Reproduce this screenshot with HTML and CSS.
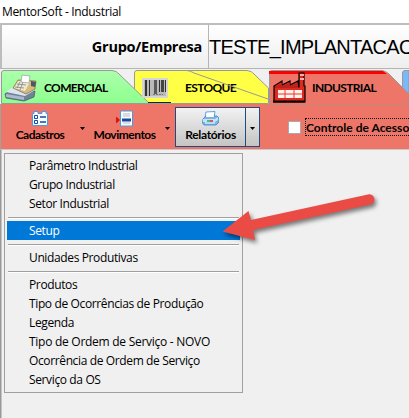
FILE: index.html
```html
<!DOCTYPE html>
<html lang="pt-BR">
<head>
<meta charset="utf-8">
<title>MentorSoft - Industrial</title>
<link rel="stylesheet" href="styles.css">
</head>
<body>
<div class="window">
  <div class="titlebar">MentorSoft - Industrial</div>
  <header class="company">
    <div class="company-label">Grupo/Empresa</div>
    <div class="company-value">TESTE_IMPLANTACAO</div>
  </header>
  <nav class="tabs">
    <svg class="tab-shapes" width="409" height="36" viewBox="0 0 409 36">
      <defs><linearGradient id="green" x2="0" y2="1"><stop stop-color="#acffac"/><stop offset="1" stop-color="#8dff8e"/></linearGradient></defs>
      <path d="M402.500 36V4Q402.500 1.500 405 1.500H409V36Z" fill="#79b8fa" stroke="#999"/>
      <path d="M134.500 34.500V4Q134.500 1.500 137 1.500H247Q252 2 254 5L268.500 19V34.500Z" fill="#ffff45" stroke="#999"/>
      <path d="M1.500 34.500V4Q1.500 1.500 4 1.500H112Q117 2 119 5L149.500 34.500Z" fill="url(#green)" stroke="#999"/>
      <path d="M269.500 36V4Q269.500 1.500 272 1.500H382Q386 2 389 5L409 25V36Z" fill="#ee7668" stroke="#999"/>
      <path d="M269 2H383L387 5H269Z" fill="#f00"/>
      <path d="M148 33.500H171" stroke="#222"/>
    </svg>
    <div class="tab tab-comercial">
      <svg width="34" height="28" viewBox="0 0 34 28">
        <path d="M1 20 10 14 31 17 30 23 20 27 2 24Z" fill="#71829a" stroke="#44505f" stroke-width=".7"/>
        <path d="M2 18 9 13 31 16 21 22Z" fill="#dce6f0"/>
        <path d="M2 20 20 23V26L2 23Z" fill="#a9bbcd"/>
        <path d="m9 14 5-8 18 1-1 8-9 5Z" fill="#d6bb7d" stroke="#786642" stroke-width=".7"/>
        <path d="m14 7 12 1-5 9-11-3Z" fill="#eee9cf"/>
        <path d="m13 10 9 1m-11 2 9 1m-4-6-3 6m6-6-3 8" stroke="#7f8790" stroke-width=".8"/>
        <path d="m17 8 1-7 8 1-1 7Z" fill="#fff" stroke="#999" stroke-width=".7"/>
        <path d="m27 7 5 1-1 5-4-1Z" fill="#4c5961"/>
      </svg>
      <span>COMERCIAL</span>
    </div>
    <div class="tab tab-estoque">
      <svg width="26" height="20" viewBox="0 0 26 20">
        <path d="M0 0H26V20H0Z" fill="#d5d5d5"/><path d="M2 2H24V18H2Z" fill="#b9b9b9"/>
        <path d="M3 2h2v16H3ZM7 2h1v16H7ZM17 2h1v12h-1ZM23 2h1v12h-1Z" fill="#333"/>
        <path d="M12 2h3v14h-3Z" fill="#5b5b5b"/><path d="M19 2h3v12h-3Z" fill="#444"/>
        <path d="M11 16.500H21" stroke="#777" stroke-dasharray="2 1"/>
      </svg>
      <span>ESTOQUE</span>
    </div>
    <div class="tab tab-industrial">
      <svg width="33" height="31" viewBox="0 0 33 31">
        <path d="M1 30V14L9 9V13L17 9V13L25 9V15H26V1H31V14H32V30Z" fill="#dd2a20" stroke="#000" stroke-width="1.200"/>
        <path d="M2 15 9 11V14L17 11V14L25 11V16H2Z" fill="#bd2119"/>
        <path d="M27 3h4m-4 4h4" stroke="#ffaca4" stroke-width="2"/>
        <path d="M5 18H29V26H5Z" fill="#fff2ee"/>
        <path d="M4 22H30M12 17V26M21 17V26" stroke="#ed3525"/>
        <path d="M0 28.500H32V30.500H0Z" fill="#000"/>
      </svg>
      <span>INDUSTRIAL</span>
    </div>
    <svg class="tab-shapes" width="409" height="36" viewBox="0 0 409 36">
      <path d="M187 1.500Q191 2 194 4L268 30" fill="none" stroke="#999"/>
    </svg>
  </nav>
  <div class="toolbar">
    <div class="tool cadastros">
      <svg width="16" height="15" viewBox="0 0 16 15">
        <path d="M.5 2.500H2V.5H6V2.500H10V.5H14V2.500H15.500V14.500H.5Z" fill="#f8fcff" stroke="#4b9be1"/>
        <path d="M8 6h6M8 11h6" stroke="#154aa0" stroke-width="1.500"/>
        <path d="M2.500 4.500h3v3h-3ZM2.500 9.500h3v3h-3Z" fill="#fff" stroke="#154aa0"/>
      </svg>
      <span>Cadastros</span>
    </div>
    <i class="arrow arrow-first"></i>
    <div class="tool movimentos">
      <svg width="17" height="16" viewBox="0 0 17 16">
        <path d="M4.500.5h12v15h-12Z" fill="#f8fcff" stroke="#4b9be1"/>
        <path d="M7 3.500h7M7 5.500h7M7 12.500h7" stroke="#bbb"/>
        <path d="M6 8h9v3H6Z" fill="#154aa0"/><path d="m0 6 4 3.500L0 13Z" fill="#d91212"/>
      </svg>
      <span>Movimentos</span>
    </div>
    <i class="arrow"></i>
    <div class="split-button">
      <div class="tool relatorios">
        <svg width="17" height="15" viewBox="0 0 17 15">
          <path d="m4 1 9-.5-1 6H3Z" fill="#fff" stroke="#5aa3e3"/>
          <path d="m1 8 3-3h11l2 2v4l-3 3H2L.5 12Z" fill="#78b4e9" stroke="#3a83cc" stroke-width=".8"/>
          <path d="M4 6h8l-1-4H5Z" fill="#fff"/><path d="M1 8h12l3-2v3l-3 2H1Z" fill="#c7e3fb"/>
          <path d="M5 10h3" stroke="#22b14c" stroke-width="1.500"/><path d="M8 10h3" stroke="#e22" stroke-width="1.500"/>
          <path d="M3 12h10" stroke="#fff"/>
        </svg>
        <span>Relatórios</span>
      </div>
      <div class="split-arrow"><i class="arrow"></i></div>
    </div>
    <div class="check"><span class="box"></span><span class="check-label">Controle de Acesso</span></div>
  </div>
  <main class="content">
    <div class="menu">
      <div class="item">Parâmetro Industrial</div>
      <div class="item">Grupo Industrial</div>
      <div class="item">Setor Industrial</div>
      <div class="separator"></div>
      <div class="item selected">Setup</div>
      <div class="separator"></div>
      <div class="item">Unidades Produtivas</div>
      <div class="separator"></div>
      <div class="item">Produtos</div>
      <div class="item">Tipo de Ocorrências de Produção</div>
      <div class="item">Legenda</div>
      <div class="item wide">Tipo de Ordem de Serviço - NOVO</div>
      <div class="item">Ocorrência de Ordem de Serviço</div>
      <div class="item">Serviço da OS</div>
    </div>
  </main>
  <svg class="pointer" width="170" height="65" viewBox="0 0 170 65">
    <path d="M11.500 41.500 37.500 21 40 30 157 4.500A5 5 0 0 1 159.500 14.500L42 40 44 50Z" fill="#ea4b45"/>
  </svg>
</div>
</body>
</html>
```

FILE: styles.css
```css
* { box-sizing: border-box; }
body { margin: 0; background: #f0f0f0; color: #000; }
.window { position: relative; width: 409px; height: 418px; overflow: hidden; display: flex; flex-direction: column; }
.titlebar { height: 23px; background: #fff; padding-left: 2px; font: 12px/24px "Open Sans", sans-serif; letter-spacing: -.33px; }
.company { height: 46px; border-top: 2px solid #bdbdbd; border-left: 2px solid #bdbdbd; border-bottom: 1px solid #b5b5b5; background: linear-gradient(#fff, #eee); display: flex; white-space: nowrap; }
.company-label { flex: none; width: 207px; padding: 1px 6px 0 0; text-align: right; font: 700 14.500px/42px "Open Sans", sans-serif; letter-spacing: -.25px; border-right: 1px solid #b5b5b5; }
.company-value { flex: none; padding-left: 0; font: 20px/45px "Liberation Sans", Arial, sans-serif; letter-spacing: -.75px; }
.tabs { position: relative; height: 35px; display: flex; background: #f0f0f0; font: 700 12px/35px "Lato", sans-serif; }
.tab-shapes { position: absolute; left: 0; top: 0; }
.tab { position: relative; display: flex; white-space: nowrap; height: 35px; flex: none; letter-spacing: -.65px; }
.tab-comercial { width: 142px; padding-left: 4px; }
.tab-comercial svg { margin: 5px 6px 0 0; }
.tab-estoque { width: 130px; }
.tab-estoque svg { margin: 9px 17px 0 0; }
.tab-industrial svg { margin: 3px 6px 0 1px; }
.tab span { padding-top: 1px; }
.toolbar { flex: none; height: 45px; border-left: 1px solid #a0a0a0; background: #ee7668; display: flex; font: 700 12px/14px "Lato", sans-serif; }
.tool { display: flex; flex: none; flex-direction: column; align-items: center; white-space: nowrap; letter-spacing: -.5px; }
.tool svg { height: 17px; flex: none; }
.tool span { margin-top: 1px; }
.cadastros { width: 78px; padding-top: 6px; }
.movimentos { width: 71px; padding-top: 6px; margin-left: 4px; }
.arrow { flex: none; width: 5px; height: 3px; background: #000; clip-path: polygon(0 0, 100% 0, 50% 100%); margin-top: 23px; margin-left: 5px; }
.arrow-first { margin-left: 1px; }
.split-button { flex: none; width: 85px; height: 40px; margin: 3px 0 0 5px; border: 1px solid #1b4d83; background: linear-gradient(#f2f2f2, #c4c4c4); display: flex; }
.relatorios { width: 69px; padding-top: 2px; letter-spacing: -.3px; }
.split-arrow { flex: 1; border-left: 1px solid #1b4d83; padding-left: 4px; }
.split-arrow .arrow { display: block; margin: 19px 0 0; }
.check { flex: none; display: flex; margin: 14px 0 0 28px; white-space: nowrap; }
.box { width: 13px; height: 13px; margin-top: 3px; background: #fff; border: 1px solid #aaa; flex: none; }
.check-label { height: 18px; width: 110px; margin-left: 4px; border: 1px dotted #000; line-height: 17px; flex: none; letter-spacing: .03px; }
.content { flex: 1; border-left: 1px solid #999; border-top: 1px solid #c8c8c8; box-shadow: inset 1px 0 #c4c4c4; padding: 3px; }
.menu { width: 239px; height: 240px; border: 1px solid #a0a0a0; padding: 2px; font: 12px/19px "Open Sans", sans-serif; }
.item { height: 19px; padding-left: 22px; white-space: nowrap; letter-spacing: -.37px; }
.wide { letter-spacing: -.27px; }
.selected { background: #0078d7; color: #fff; }
.separator { height: 8px; margin: 0 1px; background: linear-gradient(#f0f0f0 4px, #a0a0a0 4px, #a0a0a0 5px, #fff 5px, #fff 6px, #f0f0f0 6px); }
.pointer { position: absolute; left: 211px; top: 190px; filter: drop-shadow(2px 3px 2px rgba(0, 0, 0, .5)); }
```
